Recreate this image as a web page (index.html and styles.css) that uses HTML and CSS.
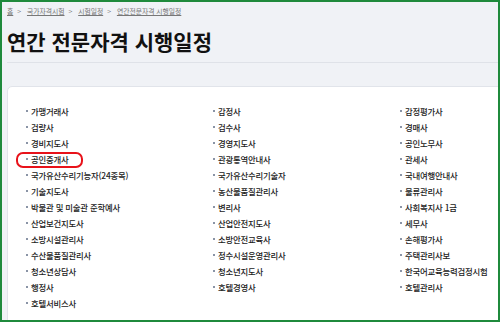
FILE: index.html
```html
<!DOCTYPE html>
<html lang="ko">
<head>
  <meta charset="UTF-8" />
  <title>연간 전문자격 시행일정</title>
  <link rel="stylesheet" href="styles.css">
</head>
<body>

  <div class="frame">
    <nav class="crumbs">
      <a href="#">홈</a><span class="sep">&gt;</span>
      <a href="#">국가자격시험</a><span class="sep">&gt;</span>
      <a href="#">시험일정</a><span class="sep">&gt;</span>
      <a href="#">연간전문자격 시행일정</a>
    </nav>

    <h1 class="title">연간 전문자격 시행일정</h1>

    <div class="card">
      <ul class="exam-list">
        <li>가맹거래사</li>
        <li>감정사</li>
        <li>감정평가사</li>
        <li>검량사</li>
        <li>검수사</li>
        <li>경매사</li>
        <li>경비지도사</li>
        <li>경영지도사</li>
        <li>공인노무사</li>
        <li class="marked">공인중개사</li>
        <li>관광통역안내사</li>
        <li>관세사</li>
        <li>국가유산수리기능자(24종목)</li>
        <li>국가유산수리기술자</li>
        <li>국내여행안내사</li>
        <li>기술지도사</li>
        <li>농산물품질관리사</li>
        <li>물류관리사</li>
        <li>박물관 및 미술관 준학예사</li>
        <li>변리사</li>
        <li>사회복지사 1급</li>
        <li>산업보건지도사</li>
        <li>산업안전지도사</li>
        <li>세무사</li>
        <li>소방시설관리사</li>
        <li>소방안전교육사</li>
        <li>손해평가사</li>
        <li>수산물품질관리사</li>
        <li>정수시설운영관리사</li>
        <li>주택관리사보</li>
        <li>청소년상담사</li>
        <li>청소년지도사</li>
        <li>한국어교육능력검정시험</li>
        <li>행정사</li>
        <li>호텔경영사</li>
        <li>호텔관리사</li>
        <li>호텔서비스사</li>
      </ul>
    </div>
  </div>

</body>
</html>
```

FILE: styles.css
```css
body {
  margin: 0;
  font-family: "Noto Sans CJK KR", "Noto Sans", sans-serif;
}

.frame {
  width: 500px;
  height: 322px;
  box-sizing: border-box;
  border: 2px solid #1f8a3c;
  background-color: #f0f2f6;
  padding-left: 5px;
  overflow: hidden;
}

.crumbs {
  padding-top: 4px;
  height: 10px;
  line-height: 10px;
  font-size: 6.8px;
  color: #777;
}

.crumbs a {
  color: #777;
  text-decoration: underline;
}

.crumbs .sep {
  margin: 0 4px;
  text-decoration: none;
}

.title {
  margin: 12px 0 0;
  padding-bottom: 8px;
  font-size: 21px;
  line-height: 26px;
  font-weight: 700;
  color: #111;
  border-bottom: 1px solid #dfe2e8;
}

.card {
  margin-top: 23px;
  margin-right: -40px;
  height: 300px;
  background-color: #fff;
  border: 1px solid #e1e4ea;
  border-radius: 5px;
  padding: 16px 0 0 18px;
}

.exam-list {
  list-style: none;
  margin: 0;
  padding: 0;
  display: grid;
  grid-template-columns: repeat(3, 187px);
}

.exam-list li {
  position: relative;
  display: flex;
  align-items: center;
  gap: 3px;
  height: 16px;
  font-size: 8.4px;
  font-weight: 500;
  color: #222;
  letter-spacing: -0.2px;
}

.exam-list li::before {
  content: "";
  width: 2px;
  height: 2px;
  background-color: #8a94a6;
}

.exam-list li.marked::after {
  content: "";
  position: absolute;
  left: -10px;
  top: 1px;
  width: 67px;
  height: 16px;
  box-sizing: border-box;
  border: 2px solid #e8121a;
  border-radius: 7px;
}
```
